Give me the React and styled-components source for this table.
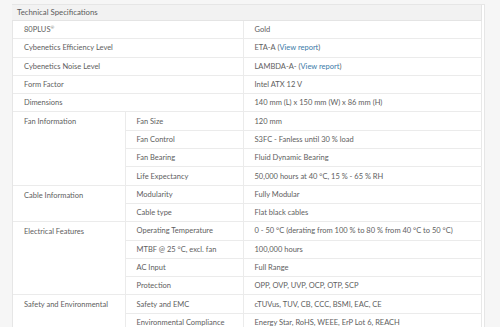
import styled, { createGlobalStyle } from 'styled-components';

const Global = createGlobalStyle`
    html, body {
        margin: 0;
        padding: 0;
        background: #f6f6f6;
        font-family: "Lato", "Liberation Sans", sans-serif;
    }
`

const Page = styled.div`
    width: 500px;
    height: 327px;
    overflow: hidden;
    padding: 4px 15px 0 12px;
    box-sizing: border-box;
`

const Card = styled.div`
    background: #fff;
    border: 1px solid #e6e6e6;
    border-bottom: none;
    padding-right: 2px;
`

const Header = styled.div`
    height: 15px;
    line-height: 15px;
    background: #f2f2f2;
    border-bottom: 1px solid #e4e4e4;
    border-right: 1px solid #e4e4e4;
    font-size: 7.8px;
    color: #5c5c5c;
    padding-left: 5px;
    margin-left: -1px;
`

const Table = styled.table`
    width: 100%;
    border-collapse: collapse;
    table-layout: fixed;
    border-right: 1px solid #e8e8e8;
`

const Cell = styled.td`
    height: 17.3px;
    padding: 0 0 0 11px;
    font-size: 7.5px;
    color: #5e5e5e;
    border-bottom: 1px solid #ebebeb;
    border-right: ${props => props.divider ? "1px solid #ebebeb" : "none"};
    vertical-align: ${props => props.top ? "top" : "middle"};
    padding-top: ${props => props.top ? "5px" : "0"};
    white-space: nowrap;
    overflow: hidden;
`

const Link = styled.a`
    color: #3a7aa8;
    text-decoration: none;
`

const Sup = styled.sup`
    font-size: 4.5px;
    vertical-align: 3px;
`

const report = <>(<Link href="#">View report</Link>)</>

const specs = [
    { label: <>80PLUS<Sup>®</Sup></>, value: "Gold" },
    { label: "Cybenetics Efficiency Level", value: <>ETA-A {report}</> },
    { label: "Cybenetics Noise Level", value: <>LAMBDA-A- {report}</> },
    { label: "Form Factor", value: "Intel ATX 12 V" },
    { label: "Dimensions", value: "140 mm (L) x 150 mm (W) x 86 mm (H)" },
    {
        label: "Fan Information",
        items: [
            ["Fan Size", "120 mm"],
            ["Fan Control", "S3FC - Fanless until 30 % load"],
            ["Fan Bearing", "Fluid Dynamic Bearing"],
            ["Life Expectancy", "50,000 hours at 40 °C, 15 % - 65 % RH"],
        ]
    },
    {
        label: "Cable Information",
        items: [
            ["Modularity", "Fully Modular"],
            ["Cable type", "Flat black cables"],
        ]
    },
    {
        label: "Electrical Features",
        items: [
            ["Operating Temperature", "0 - 50 °C (derating from 100 % to 80 % from 40 °C to 50 °C)"],
            ["MTBF @ 25 °C, excl. fan", "100,000 hours"],
            ["AC Input", "Full Range"],
            ["Protection", "OPP, OVP, UVP, OCP, OTP, SCP"],
        ]
    },
    {
        label: "Safety and Environmental",
        items: [
            ["Safety and EMC", "cTUVus, TUV, CB, CCC, BSMI, EAC, CE"],
            ["Environmental Compliance", "Energy Star, RoHS, WEEE, ErP Lot 6, REACH"],
        ]
    },
]

export default function App() {
    return (
        <Page>
            <Global />
            <Card>
                <Header>Technical Specifications</Header>
                <Table>
                    <colgroup>
                        <col style={{ width: 112 }} />
                        <col style={{ width: 118 }} />
                        <col />
                    </colgroup>
                    <tbody>
                        {specs.map((spec, i) => {
                            if (!spec.items) {
                                return (
                                    <tr key={i}>
                                        <Cell colSpan={2} divider>{spec.label}</Cell>
                                        <Cell>{spec.value}</Cell>
                                    </tr>
                                )
                            }
                            return spec.items.map(([name, value], j) => (
                                <tr key={i + "-" + j}>
                                    {j === 0 && (
                                        <Cell rowSpan={spec.items.length} divider top>{spec.label}</Cell>
                                    )}
                                    <Cell divider>{name}</Cell>
                                    <Cell>{value}</Cell>
                                </tr>
                            ))
                        })}
                    </tbody>
                </Table>
            </Card>
        </Page>
    )
}
